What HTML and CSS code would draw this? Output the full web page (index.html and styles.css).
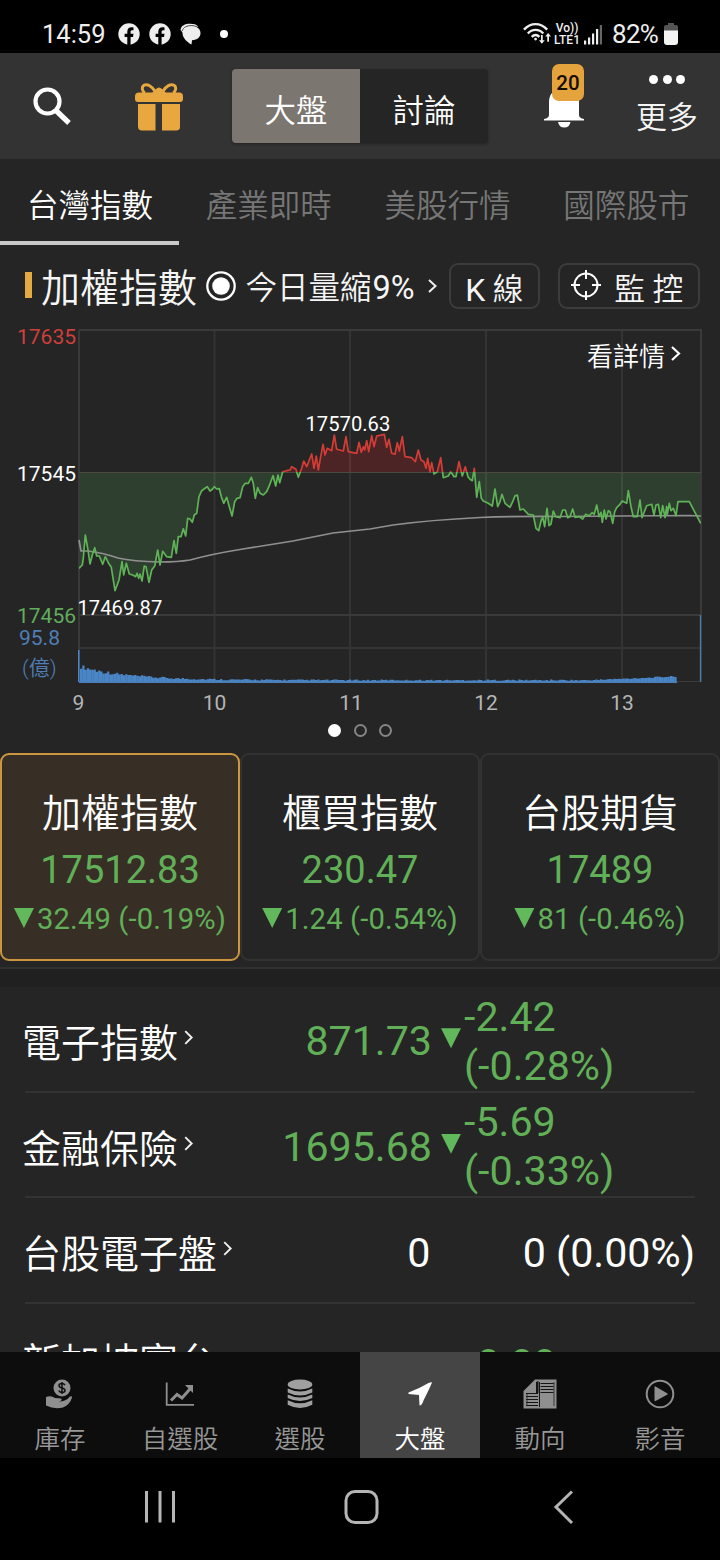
FILE: index.html
```html
<!DOCTYPE html>
<html lang="zh-Hant">
<head>
<meta charset="utf-8">
<title>大盤</title>
<link rel="stylesheet" href="styles.css">
</head>
<body>
<div class="phone">
  <div class="status">
    <span class="clock">14:59</span>
    <svg class="fb" viewBox="0 0 22 22"><circle cx="11" cy="11" r="10.7" fill="#eee"/><path d="M9.3 22v-8H6.6v-3.2h2.7V8.6c0-2.8 1.7-4.3 4.2-4.3 1 0 2 .2 2 .2v2.8h-1.300c-1.300 0-1.600.8-1.600 1.600v1.900h2.900l-.5 3.200h-2.400v8z" fill="#000"/></svg>
    <svg class="fb" viewBox="0 0 22 22"><circle cx="11" cy="11" r="10.7" fill="#eee"/><path d="M9.3 22v-8H6.6v-3.2h2.7V8.6c0-2.8 1.7-4.3 4.2-4.3 1 0 2 .2 2 .2v2.8h-1.300c-1.300 0-1.600.8-1.600 1.600v1.900h2.900l-.5 3.200h-2.400v8z" fill="#000"/></svg>
    <svg class="chat" viewBox="0 0 22 22"><path d="M.5 7C1 2.500 5 .800 10 .800c4 0 6.500.7 8 2.700L12 9 2.500 9.500z" fill="#eee"/><path d="M11.500 3C17 3 20.500 6 20.500 10s-3 7-8.500 7.300l-.5 4.200c-4-2-9-6.500-9-11.500 0-4 4-7 9-7z" fill="#eee"/><path d="M2.200 8c1-4 5-5.400 9-5.400 2.500 0 4.500.5 6.500 1.700" stroke="#333" stroke-width=".9" fill="none"/></svg>
    <i class="dot"></i>
    <span class="gap"></span>
    <svg class="wifi" viewBox="0 0 30 23" fill="none" stroke="#eee" stroke-width="2.400"><path d="M1 7.500C8-.2 18-.2 25 7.500M5 11.500c4.500-5 11.500-5 16 0M9 15c2.500-2.600 5.500-2.600 8 0"/><circle cx="13" cy="17.300" r="1.500" fill="#eee" stroke="none"/><path d="M19.500 13v7.500M26 20v-7" stroke-width="1.800"/><path d="M16.500 18.500l3 3.500 3-3.500zM23 14.500l3-3.500 3 3.500z" fill="#eee" stroke="none"/></svg>
    <span class="volte"><b>Vo))</b><b>LTE1</b></span>
    <svg class="signal" viewBox="0 0 18 20" fill="#eee"><path d="M0 15.500h2.200v4H0zM4 12.500h2.200v7H4zM8 8.500h2.200v11H8zM12 4h2.200v15.500H12z"/><path d="M15.800 0H18v19.500h-2.200z" fill="#666"/></svg>
    <span class="pct">82%</span>
    <svg class="batt" viewBox="0 0 14 22"><path d="M4 0h6v2h2q2 0 2 2v5H0V4q0-2 2-2h2z" fill="#555"/><path d="M0 7.500h14V19q0 3-3 3H3q-3 0-3-3z" fill="#f3f3f3"/></svg>
  </div>

  <header class="header">
    <svg class="search" viewBox="0 0 38 38" fill="none" stroke="#fff"><circle cx="14.500" cy="14.500" r="12" stroke-width="4.200"/><path d="M23.500 24l12.500 12" stroke-width="5.200"/></svg>
    <svg class="gift" viewBox="0 0 48 48" fill="#e9a73f"><path d="M3 19h17.500v26.500H7q-4 0-4-4zM27 19h18v23q0 3.500-4 3.500H27z" transform="translate(0 2)"/><path d="M4 9.500h40q4 0 4 4V16q0 3-3 3H3q-3 0-3-3v-2.500q0-4 4-4z"/><path d="M21 9.500C17 3 12 .5 9 2.300 6 4.300 7.500 9 10 10M27 9.500c4-7 9-9 12-7.200 3 2 1.500 6.700-1 7.700" fill="none" stroke="#e9a73f" stroke-width="3"/><path d="M17 10l4-4q3-3 6 0l4 4z"/></svg>
    <div class="switch"><span class="on">大盤</span><span>討論</span></div>
    <div class="bell">
      <svg viewBox="0 0 42 64"><path d="M6 54V38q0-13 15-13t15 13v13q0 3 5 4v1.500H1V55q5-1 5-4z" fill="#fff"/><path d="M15 58h12.500q-1 5.500-6.200 5.500T15 58z" fill="#fff"/></svg>
      <span class="badge">20</span>
    </div>
    <div class="more"><div class="dots"><i></i><i></i><i></i></div><span>更多</span></div>
  </header>

  <nav class="tabs"><span class="on">台灣指數</span><span>產業即時</span><span>美股行情</span><span>國際股市</span></nav>

  <section class="title">
    <i class="bar"></i><h1>加權指數</h1>
    <svg class="radio" viewBox="0 0 30 30"><circle cx="15" cy="15" r="13.700" fill="none" stroke="#fff" stroke-width="2.300"/><circle cx="15" cy="15" r="8.800" fill="#fff"/></svg>
    <span class="vol">今日量縮<span class="num">9%</span></span>
    <svg class="chev" viewBox="0 0 9 14" fill="none" stroke="#eee" stroke-width="2"><path d="M1 1l6.500 6L1 13"/></svg>
    <span class="btn kline"><span class="num">K</span> 線</span>
    <span class="btn watch"><svg viewBox="0 0 30 30" fill="none" stroke="#fff" stroke-width="2"><circle cx="15" cy="15" r="11.500"/><path d="M15 0v9M15 21v9M0 15h9M21 15h9"/></svg>監 控</span>
  </section>

  <svg class="chart" viewBox="0 320 720 398">
    <defs>
      <clipPath id="above"><path d="M79 330H701V472H79z"/></clipPath>
      <clipPath id="below"><path d="M79 472H701V615H79z"/></clipPath>
    </defs>
    <path id="areaDown" class="area-down" clip-path="url(#below)"/>
    <path id="areaUp" class="area-up" clip-path="url(#above)"/>
    <g stroke="#3a3a3a" stroke-width="2" fill="none">
      <path d="M214.500 330V681M350 330V681M486 330V681M622 330V681M79 648H701" stroke="#fff" stroke-opacity=".07"/>
      <path d="M79 330H701V681.500M79 330V681.500M79 615H701"/>
      <path d="M79 472.500H701" stroke="#4a4a40" stroke-width="1"/>
      <path d="M79 681.500H701" stroke-width="1"/>
    </g>
    <path class="avg" d="M79 540L81 551L88 551Q104 553 118 558Q133 561.500 160 562Q178 562 190 560Q212 554 240 549.500L293 541Q318 536 333 533L370 529L393 525Q430 520 480 517.500Q520 516 560 516.500L620 516L690 515.500L701 516"/>
    <path id="lineDown" class="line down" clip-path="url(#below)"/>
    <path id="lineUp" class="line up" clip-path="url(#above)"/>
    <path id="volume" class="volume"/>
    <path d="M79 682.300H677" stroke="#4a7fb8" stroke-width="1.500"/>
    <path d="M700.500 615V682" stroke="#4a7da8" stroke-width="1.300"/>
    <g class="ticks">
      <text x="17" y="344" fill="#cf3f3c">17635</text>
      <text x="17" y="480.500" fill="#fff">17545</text>
      <text x="17" y="623" fill="#61ad5c">17456</text>
      <text x="19" y="644.500" fill="#4f7fb5">95.8</text>
      <text x="22" y="675" fill="#4f7fb5" class="unit">(億)</text>
      <text x="77.500" y="614.500" fill="#fff" class="peak">17469.87</text>
      <text x="305.500" y="431" fill="#fff" class="peak">17570.63</text>
    </g>
    <g class="hours">
      <text x="78.500" y="710">9</text><text x="214.500" y="710">10</text><text x="351" y="710">11</text><text x="486" y="710">12</text><text x="622" y="710">13</text>
    </g>
    <text x="587" y="365.500" class="detail">看詳情</text>
    <path d="M672 347l7 6.500-7 6.500" fill="none" stroke="#fff" stroke-width="2.200"/>
  </svg>
  <div class="pager"><i class="on"></i><i></i><i></i></div>

  <section class="cards">
    <div class="card on"><h2>加權指數</h2><strong>17512.83</strong><p><i class="tri"></i>32.49 (-0.19%)</p></div>
    <div class="card"><h2>櫃買指數</h2><strong>230.47</strong><p><i class="tri"></i>1.24 (-0.54%)</p></div>
    <div class="card"><h2>台股期貨</h2><strong>17489</strong><p><i class="tri"></i>81 (-0.46%)</p></div>
  </section>
  <div class="divider"></div>

  <section class="list">
    <div class="row"><div class="name">電子指數<svg class="chev" viewBox="0 0 9 14" fill="none" stroke="#eee" stroke-width="1.800"><path d="M1 1l6 6-6 6"/></svg></div><div class="val">871.73</div><i class="tri"></i><div class="chg">-2.42<br>(-0.28%)</div></div>
    <div class="row"><div class="name">金融保險<svg class="chev" viewBox="0 0 9 14" fill="none" stroke="#eee" stroke-width="1.800"><path d="M1 1l6 6-6 6"/></svg></div><div class="val">1695.68</div><i class="tri"></i><div class="chg">-5.69<br>(-0.33%)</div></div>
    <div class="row flat"><div class="name">台股電子盤<svg class="chev" viewBox="0 0 9 14" fill="none" stroke="#eee" stroke-width="1.800"><path d="M1 1l6 6-6 6"/></svg></div><div class="val">0</div><div class="chg">0 (0.00%)</div></div>
    <div class="row last"><div class="name">新加坡富台</div><div class="val"></div><div class="chg">0.00</div></div>
  </section>

  <nav class="bottom">
    <div><svg viewBox="0 0 30 30" fill="#8f8f8f"><circle cx="17" cy="9" r="8.500"/><path d="M1 18q5-2 9 1l6 .5q2 2-2 3 7 0 11-5 2-1 2 1-2 7-9 10-9 2-17-2z"/><path d="M20 6.200q-1-1.700-3-1.700c-4 0-4 3.700 0 4.400 4 .7 4 4.600 0 4.600q-2.600 0-3.200-1.900M17 3v12" fill="none" stroke="#0e0e0e" stroke-width="1.500"/></svg><span>庫存</span></div>
    <div><svg viewBox="0 0 30 30" fill="none" stroke="#8f8f8f"><path d="M1.700 3.500v22.300H29" stroke-width="1.800"/><path d="M6 21.500l6-6 5 3.500 8-9" stroke-width="3"/><path d="M20 6h8v8z" fill="#8f8f8f" stroke="none"/></svg><span>自選股</span></div>
    <div><svg viewBox="0 0 30 30" fill="#a0a0a0"><ellipse cx="15" cy="5.500" rx="12.300" ry="5"/><path d="M2.700 9.500q12.300 6 24.600 0v4q-12.300 6-24.600 0zM2.700 15.500q12.300 6 24.600 0v3.500q-12.300 6-24.600 0zM2.700 21.300q12.300 6 24.600 0v4.500q-12.300 6.500-24.600 0z"/></svg><span>選股</span></div>
    <div class="on"><svg viewBox="0 0 30 30" fill="#fff"><path d="M27 3.500q-1.500 4-8.500 18-1.500 5-4 5l-.5-10.500L3.500 15v-1.500q11-4 20-9.500 3-1.200 3.500-.5z"/></svg><span>大盤</span></div>
    <div><svg class="news" viewBox="0 0 34 30"><path d="M12 .5h21.500v29H.5V12z" fill="#8f8f8f"/><path d="M16.500 3v25M17.500 4.500h13.300M17.500 7.500h13M17.500 10.500h13M17.500 13.500h13M3 17.500h12M3 20.500h12M3 23.500h12M3 26.500h12M3 14.500h12" stroke="#151515" stroke-width="1" fill="none"/><path d="M13 3v11h2.500V2z" fill="#151515"/><path d="M31 3v24M4 15v12" stroke="#222" stroke-width=".8"/></svg><span>動向</span></div>
    <div><svg viewBox="0 0 30 30"><circle cx="15" cy="15" r="13.300" fill="none" stroke="#8f8f8f" stroke-width="2"/><path d="M9.500 8q0-1 1-.5l12 7q.8.500 0 1l-12 6.500q-1 .5-1-.5z" fill="#8f8f8f"/></svg><span>影音</span></div>
  </nav>

  <div class="sysnav">
    <svg viewBox="0 0 720 102" fill="none" stroke="#b5b5b5" stroke-width="3"><path d="M146.500 33v31.500M160 33v31.500M173.500 33v31.500"/><rect x="346" y="33.500" width="31" height="31" rx="9"/><path d="M572 33.500L556 49l16 16"/></svg>
  </div>
</div>
<script src="chart.js"></script>
</body>
</html>
```

FILE: styles.css
```css
* { box-sizing: border-box; }
body { margin: 0; background: #252525; color: #f5f5f5; font-family: Roboto, "Noto Sans CJK TC", sans-serif; }
h1, h2, p { margin: 0; font-weight: inherit; }
svg, i { display: block; flex: none; }
.phone { width: 720px; height: 1560px; display: flex; flex-direction: column; overflow: hidden; font-weight: 350; }
.phone > * { flex: none; }
.num { font-weight: 400; }

.status { height: 53px; background: #000; display: flex; align-items: center; padding: 16px 42px 0 42px; color: #eee; font-size: 25.500px; line-height: 37px; font-weight: 400; }
.clock { width: 75.500px; }
.fb { width: 22px; height: 22px; margin: -2px 9px 0 0; }
.chat { width: 22px; height: 22px; margin-top: -1px; }
.dot { width: 8px; height: 8px; border-radius: 50%; background: #fff; margin: -2px 0 0 18px; }
.gap { flex: 1; }
.wifi { width: 29px; height: 23px; margin: -2px 1px 0 0; }
.volte { width: 28px; height: 24px; margin-top: -2px; }
.volte b { display: block; font-size: 12px; line-height: 12px; font-weight: 500; text-align: center; white-space: nowrap; }
.signal { width: 18px; height: 20px; margin: 0 10px 0 3px; }
.pct { width: 52px; letter-spacing: -.7px; font-size: 26px; white-space: nowrap; }
.batt { width: 14px; height: 22px; margin-top: -2px; }

.header { height: 106px; background: #333; display: flex; align-items: flex-start; }
.search { width: 38px; height: 38px; margin: 34px 0 0 33px; }
.gift { width: 48px; height: 48px; margin: 30px 0 0 64px; }
.switch { display: flex; width: 256px; height: 74px; margin: 16px 0 0 49px; border-radius: 4px; background: #252525; box-shadow: 0 1px 3px #222; overflow: hidden; }
.switch span { width: 128px; text-align: center; font-size: 31.500px; line-height: 80px; padding-top: 2.500px; color: #fff; }
.switch .on { background: #7c7671; }
.bell { position: relative; width: 42px; height: 64px; margin: 11px 0 0 55px; }
.bell svg { width: 42px; height: 64px; }
.badge { position: absolute; left: 9px; top: 0; width: 32px; height: 37px; border-radius: 7px; background: #e4a33d; color: #140d04; font-size: 20.500px; font-weight: 500; line-height: 39px; text-align: center; }
.more { margin: 22px 0 0 50px; width: 64px; text-align: center; font-size: 31px; line-height: 40px; }
.dots { display: flex; gap: 4.500px; padding-left: 14px; height: 23px; }
.dots i { width: 9px; height: 9px; border-radius: 50%; background: #fff; }

.tabs { height: 90px; display: flex; color: #767676; font-size: 31.500px; line-height: 90px; }
.tabs span { width: 178.800px; height: 86px; padding: 2.500px 0 0 1px; text-align: center; }
.tabs .on { color: #fff; border-bottom: 4.500px solid #c9c9c9; }

.title { height: 71px; display: flex; align-items: center; padding: 2px 20px 0 25px; }
.bar { width: 7px; height: 26px; background: #e4a940; margin-bottom: 2px; }
.title h1 { width: 166px; padding: 6px 0 0 9px; font-size: 39px; line-height: 60px; }
.radio { width: 30px; height: 30px; margin: 0 0 0 9px; }
.vol { width: 181px; padding: 6px 0 0 9px; font-size: 31.500px; line-height: 40px; white-space: nowrap; }
.vol .num { font-size: 32.500px; margin-left: 1px; }
.title .chev { width: 9px; height: 14px; margin: 0 12px 0 11px; }
.btn { height: 46px; border: 2px solid #3c3c3c; border-radius: 9px; display: flex; align-items: center; justify-content: center; font-size: 29px; line-height: 44px; padding-top: 9px; white-space: pre; }
.kline { width: 91px; font-size: 30.500px; }
.kline .num { font-size: 32px; }
.watch { width: 143px; margin-left: 18px; gap: 13px; font-size: 30.800px; padding-right: 3px; }
.watch svg { width: 30px; height: 30px; margin-top: -10px; }

.chart { width: 720px; height: 398px; }
.area-down { fill: #2f3f2f; }
.area-up { fill: #4c2425; }
.line { fill: none; stroke-width: 1.700; stroke-linejoin: round; }
.line.down { stroke: #5fb357; }
.line.up { stroke: #d43d36; }
.avg { fill: none; stroke: #909090; stroke-width: 1.700; }
.volume { fill: #4a86c6; }
.ticks { font-size: 21px; font-weight: 400; }
.peak { font-size: 20.200px; }
.hours { font-size: 21px; fill: #b5b5b5; text-anchor: middle; font-weight: 400; }
.unit { font-size: 21px; font-weight: 350; }
.detail { font-size: 26px; fill: #fff; }
.pager { height: 35px; display: flex; justify-content: center; gap: 12.500px; padding-top: 6px; }
.pager i { width: 13px; height: 13px; border-radius: 50%; border: 2px solid #858585; }
.pager .on { background: #fff; border-color: #fff; }

.cards { height: 208px; display: grid; grid-template-columns: repeat(3, 1fr); text-align: center; }
.card { border: 2px solid #323232; border-radius: 9px; padding-top: 31px; color: #61b058; }
.card.on { border-color: #cc9640; background: #372f26; }
.card h2 { color: #fff; font-size: 39px; line-height: 56px; }
.card strong { display: block; font-weight: 400; font-size: 38px; line-height: 56px; }
.card p { display: flex; justify-content: center; font-size: 29.200px; letter-spacing: .15px; font-weight: 400; line-height: 42px; white-space: nowrap; }
.tri { width: 20px; height: 20px; background: #62b95b; clip-path: polygon(0 0, 100% 0, 50% 100%); }
.card .tri { margin: 10px 3px 0 0; }
.divider { margin-top: 6px; height: 20px; background: #202020; border-top: 2px solid #303030; }

.list { height: 365px; overflow: hidden; padding: 0 25px; font-size: 41.200px; line-height: 49px; }
.row { height: 105.500px; border-bottom: 2px solid #333; display: flex; align-items: center; color: #61b058; white-space: nowrap; }
.name { width: 224px; margin-left: -3px; color: #fff; font-size: 39px; display: flex; align-items: center; padding-top: 12px; }
.list .chev { width: 10px; height: 15px; margin: -14px 0 0 6px; }
.val { width: 186px; text-align: right; padding-top: 6px; font-weight: 400; }
.row .tri { margin: -1px 3px 0 9px; height: 20px; }
.chg { padding-top: 6px; font-weight: 400; }
.flat { color: #fff; }
.flat .val { width: 188px; padding-top: 7px; }
.flat .chg { width: 267px; text-align: right; padding-top: 7px; }
.last { padding-top: 4px; }
.last .chg { margin-left: 45px; padding-top: 14px; font-size: 40.500px; }

.bottom { height: 106px; background: #0d0d0d; display: grid; grid-template-columns: repeat(6, 1fr); color: #979797; font-size: 25.500px; line-height: 34px; }
.bottom div { display: flex; flex-direction: column; align-items: center; padding-top: 27px; gap: 12.500px; }
.bottom .on { background: #454545; color: #fff; }
.bottom svg { width: 30px; height: 30px; }
.bottom .news { width: 34px; }
.sysnav { height: 102px; background: #000; }
.sysnav svg { width: 720px; height: 102px; }
```

FILE: chart.js
```js
// Intraday samples, in thirds of a pixel; each block carries its own x origin.
const blocks = [
  [0, [237,745,247,735,250,715,256,645,264,690,270,732,277,705,284,683,290,708,298,708,308,733,316,710,325,728,334,742,345,812,357,780,366,725,371,765,379,730,388,762,398,765,407,770,411,760,416,775,420,762,426,783,433,738,438,740,447,787,455,750,464,738,473,690,480,735,488,694,500,710,514,712,522,662,529,700,535,650,543,650,550,626,557,648,563,595,570,597,577,607,583,585,590,580,597,530,605,512,617,503,622,500,630,513,637,508,643,500,650,507,658,506,664,530,671,550,680,532,688,560]],
  [690, [6,588,14,545,21,535,30,533,38,500,46,490,55,490,64,472,70,490,76,535,83,503,90,520,100,525,110,515,118,497,129,467,137,498,144,465,149,488,158,455,170,452,180,450,185,440,198,448,205,472,215,445,221,423,230,440,238,420,245,402,252,445,259,408,265,450,272,410,279,373,285,405,292,385,305,392,313,345,320,388,340,393,348,350,355,395,380,400,387,367,394,397,400,380,404,390,410,362,416,395,425,347,432,380,440,348,463,343,470,382,477,358,485,400,495,403,502,368,508,393,517,350,525,410,545,413,556,425,565,390,573,420,582,425,588,445,593,415,600,455,605,428,612,462,622,455,632,413,640,473,655,468,662,455,672,470,678,470,687,425,697,468,706,440,714,470]],
  [1410, [0,478,7,482,13,445,20,532,28,485,34,535,40,543,55,550,67,558,75,507,83,560,90,545,96,523,105,550,120,562,128,545,135,527,142,525,150,570,160,567,175,583,190,585,198,625,206,632,214,600,218,592,224,620,231,565,237,617,243,612,250,573,257,590,270,593,278,570,286,570,293,593,300,590,308,567,315,592,328,590,338,597,347,583,358,587,366,578,373,583,380,555,387,590,393,577,397,607,403,570,408,597,415,572,420,575,428,610,434,575,440,563,450,553,457,543,470,550,475,512,483,560,490,590,502,590,510,540,516,593,530,557,545,553,552,585,558,555,565,553,572,593,578,557,585,593,590,560,592,583,598,550,603,572,610,565,618,587,624,545,658,545,692,610]]
];
const pts = [];
for (const [origin, list] of blocks)
  for (let i = 0; i < list.length; i += 2)
    pts.push([((origin + list[i]) / 3).toFixed(1), (320 + list[i + 1] / 3).toFixed(1)].join(' '));
const line = 'M' + pts.join('L');
const area = line + 'L701 472.500L79 472.500Z';
for (const side of ['Up', 'Down']) {
  document.getElementById('line' + side).setAttribute('d', line);
  document.getElementById('area' + side).setAttribute('d', area);
}

// Minute volume bars: heavy at the open, thin through midday, rising at the close.
let bars = 'M78 650h1.500V682h-1.500z';
for (let i = 0; i < 264; i++) {
  const x = 80 + i * 2.26;
  const noise = Math.abs(Math.sin(i * 12.9898) * 43758.5453) % 1;
  let h = 1.200 + 12 * Math.exp(-i / 20) + noise * (1.200 + 3 * Math.exp(-i / 30));
  if (i > 225) h += (i - 225) * 0.1;
  bars += `M${x.toFixed(1)} ${(682 - h).toFixed(1)}h2.200V682h-2.200z`;
}
document.getElementById('volume').setAttribute('d', bars);
```
